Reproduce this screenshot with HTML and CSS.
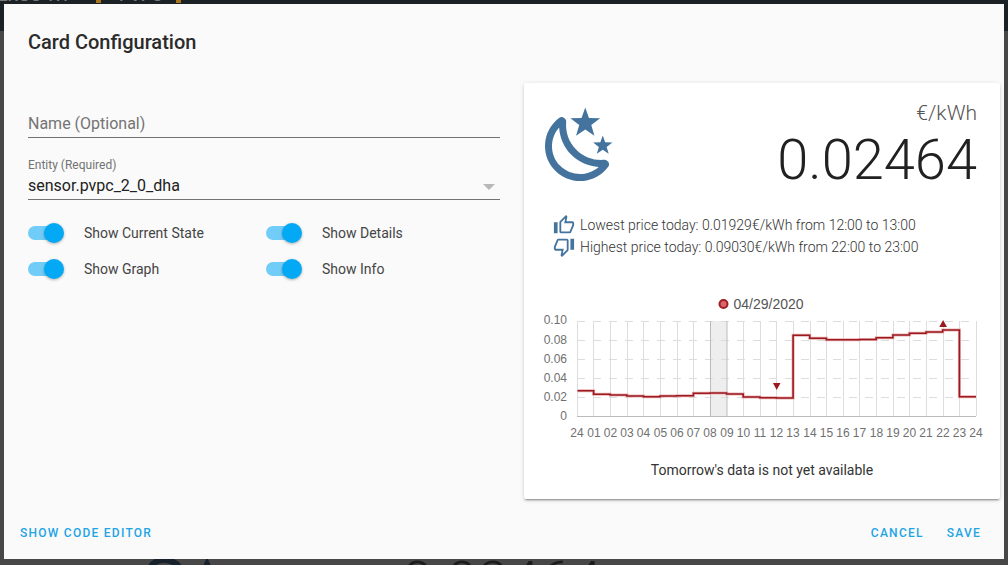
FILE: index.html
```html
<!DOCTYPE html>
<html lang="en">
<head>
    <meta charset="UTF-8">
    <meta name="viewport" content="width=device-width, initial-scale=1.0">
    <title>Card Configuration</title>
    <link rel="stylesheet" href="styles.css">
</head>
<body>
    <!-- page behind the dialog, only its edges show -->
    <div class="backdrop">
        <div class="backdrop-header">
            <span class="backdrop-title">ERGO TH</span>
            <span class="backdrop-tab">PVPC</span>
            <span class="backdrop-mark backdrop-mark-a"></span>
            <span class="backdrop-mark backdrop-mark-b"></span>
        </div>
        <svg class="backdrop-icon" viewBox="0 0 80 10"><path d="M0 10Q3 2 16 1Q30 2 34 10H26Q22 7 16 7Q10 7 7 10ZM55 10L59 1L63 10Z"/></svg>
        <span class="backdrop-price">0.02464</span>
    </div>

    <div class="dialog">
        <h2 class="dialog-title">Card Configuration</h2>

        <div class="dialog-body">
            <div class="editor">
                <div class="field field-name">
                    <span class="field-placeholder">Name (Optional)</span>
                </div>
                <div class="field field-entity">
                    <label class="field-label">Entity (Required)</label>
                    <div class="field-value">sensor.pvpc_2_0_dha</div>
                    <span class="field-arrow"></span>
                </div>
                <div class="switches">
                    <div class="switch-row"><span class="switch"><span class="switch-thumb"></span></span>Show Current State</div>
                    <div class="switch-row"><span class="switch"><span class="switch-thumb"></span></span>Show Details</div>
                    <div class="switch-row"><span class="switch"><span class="switch-thumb"></span></span>Show Graph</div>
                    <div class="switch-row"><span class="switch"><span class="switch-thumb"></span></span>Show Info</div>
                </div>
            </div>

            <div class="card">
                <div class="card-header">
                    <svg class="state-icon" viewBox="0 0 24 24"><path d="M17.75,4.09L15.22,6.03L16.13,9.09L13.5,7.28L10.87,9.09L11.78,6.03L9.25,4.09L12.44,4L13.5,1L14.56,4L17.75,4.09M21.25,11L19.61,12.25L20.2,14.23L18.5,13.06L16.8,14.23L17.39,12.25L15.75,11L17.81,10.95L18.5,9L19.19,10.95L21.25,11M18.97,15.95C19.8,15.87 20.69,17.05 20.16,17.8C19.84,18.25 19.5,18.67 19.08,19.07C15.17,23 8.84,23 4.94,19.07C1.03,15.17 1.03,8.83 4.94,4.93C5.34,4.53 5.76,4.17 6.21,3.85C6.96,3.32 8.14,4.21 8.06,5.04C7.79,7.9 8.75,10.87 10.95,13.06C13.14,15.26 16.1,16.22 18.97,15.95M17.33,17.97C14.5,17.81 11.7,16.64 9.53,14.5C7.36,12.31 6.2,9.5 6.04,6.68C3.23,9.82 3.34,14.64 6.35,17.66C9.37,20.67 14.19,20.78 17.33,17.97Z"/></svg>
                    <div class="state">
                        <div class="state-unit">€/kWh</div>
                        <div class="state-value">0.02464</div>
                    </div>
                </div>

                <div class="details">
                    <div class="detail-row">
                        <svg class="detail-icon" viewBox="0 0 24 24"><path d="M5,9V21H1V9H5M9,21A2,2 0 0,1 7,19V9C7,8.45 7.22,7.95 7.59,7.59L14.17,1L15.23,2.06C15.5,2.33 15.67,2.7 15.67,3.07L15.64,3.39L14.69,8H21C22.11,8 23,8.9 23,10V12C23,12.26 22.95,12.5 22.85,12.73L19.83,19.78C19.53,20.5 18.82,21 18,21H9M9,19H18.03L21,12V10H12.21L13.34,4.68L9,9.03V19Z"/></svg>
                        Lowest price today: 0.01929€/kWh from 12:00 to 13:00
                    </div>
                    <div class="detail-row">
                        <svg class="detail-icon" viewBox="0 0 24 24"><path d="M19,15V3H23V15H19M15,3A2,2 0 0,1 17,5V15C17,15.55 16.78,16.05 16.41,16.41L9.83,23L8.77,21.94C8.5,21.67 8.33,21.3 8.33,20.93L8.36,20.61L9.31,16H3C1.89,16 1,15.1 1,14V12C1,11.74 1.05,11.5 1.15,11.27L4.17,4.22C4.47,3.5 5.18,3 6,3H15M15,5H5.97L3,12V14H11.78L10.65,19.32L15,14.97V5Z"/></svg>
                        Highest price today: 0.09030€/kWh from 22:00 to 23:00
                    </div>
                </div>

                <!-- viewBox uses the same numbers as the screen so the hours line up -->
                <svg class="chart" viewBox="524 292 476 156">
                    <circle class="legend-dot" cx="723.5" cy="304" r="4"/>
                    <text class="legend-text" x="733.5" y="308.5">04/29/2020</text>

                    <rect class="now-band" x="710" y="321" width="17" height="95"/>
                    <path class="grid-x" d="M577.5 321V416M593.5 321V416M610.5 321V416M627.5 321V416M643.5 321V416M660.5 321V416M677.5 321V416M693.5 321V416M743.5 321V416M760.5 321V416M776.5 321V416M793.5 321V416M810.5 321V416M826.5 321V416M843.5 321V416M859.5 321V416M876.5 321V416M893.5 321V416M909.5 321V416M926.5 321V416M943.5 321V416M959.5 321V416M976.5 321V416"/>
                    <path class="grid-y" d="M577 321.5H976M577 340.5H976M577 359.5H976M577 378.5H976M577 397.5H976"/>
                    <path class="grid-now" d="M710.5 321V416M727 321V416"/>
                    <path class="grid-base" d="M577 416.5H976"/>

                    <path class="price-glow" d="M577.5 390.7H593.6V394.3H610.2V395H626.9V396H643.5V396.7H660.1V396H676.7V395.8H693.4V393.3H710V393H726.6V394H743.2V397H759.9V397.7H776.5V398H793.1V335.3H809.7V338.3H826.4V339.7H843V339.7H859.6V339.5H876.2V337.7H892.9V335H909.5V333.3H926.1V332H942.7V330H959.4V396.7H976"/>
                    <path class="price-line" d="M577.5 390.7H593.6V394.3H610.2V395H626.9V396H643.5V396.7H660.1V396H676.7V395.8H693.4V393.3H710V393H726.6V394H743.2V397H759.9V397.7H776.5V398H793.1V335.3H809.7V338.3H826.4V339.7H843V339.7H859.6V339.5H876.2V337.7H892.9V335H909.5V333.3H926.1V332H942.7V330H959.4V396.7H976"/>
                    <path class="price-mark" d="M773 383H780.5L776.7 390Z"/>
                    <path class="price-mark" d="M939.3 327H947L943.1 320Z"/>

                    <g class="ticks-y">
                        <text x="567" y="324">0.10</text>
                        <text x="567" y="343.5">0.08</text>
                        <text x="567" y="363">0.06</text>
                        <text x="567" y="382">0.04</text>
                        <text x="567" y="401">0.02</text>
                        <text x="567" y="420">0</text>
                    </g>
                    <g class="ticks-x">
                        <text x="577" y="437">24</text>
                        <text x="594" y="437">01</text>
                        <text x="610.5" y="437">02</text>
                        <text x="627" y="437">03</text>
                        <text x="643.5" y="437">04</text>
                        <text x="660.5" y="437">05</text>
                        <text x="677" y="437">06</text>
                        <text x="693.5" y="437">07</text>
                        <text x="710" y="437">08</text>
                        <text x="727" y="437">09</text>
                        <text x="743.5" y="437">10</text>
                        <text x="760" y="437">11</text>
                        <text x="776.5" y="437">12</text>
                        <text x="793" y="437">13</text>
                        <text x="810" y="437">14</text>
                        <text x="826.5" y="437">15</text>
                        <text x="843" y="437">16</text>
                        <text x="859.5" y="437">17</text>
                        <text x="876.5" y="437">18</text>
                        <text x="893" y="437">19</text>
                        <text x="909.5" y="437">20</text>
                        <text x="926" y="437">21</text>
                        <text x="943" y="437">22</text>
                        <text x="959.5" y="437">23</text>
                        <text x="976" y="437">24</text>
                    </g>
                </svg>

                <p class="card-note">Tomorrow's data is not yet available</p>
            </div>
        </div>

        <div class="dialog-actions">
            <button class="text-button">Show Code Editor</button>
            <div class="actions-right">
                <button class="text-button">Cancel</button>
                <button class="text-button">Save</button>
            </div>
        </div>
    </div>
</body>
</html>
```

FILE: styles.css
```css
* {
    box-sizing: border-box;
}

html, body {
    height: 100%;
}

body {
    margin: 0;
    padding: 4px;
    overflow: hidden;
    font-family: 'Roboto', sans-serif;
    background: #474747;
    color: #212121;
}

/* page behind the dialog */
.backdrop {
    position: absolute;
    top: 0;
    left: 0;
    width: 1008px;
    height: 565px;
    overflow: hidden;
}

.backdrop-header {
    height: 31px;
    background: #1c2126;
    color: #777;
    font-size: 17px;
    font-weight: 500;
}

.backdrop-title {
    position: absolute;
    top: -15px;
    left: -2px;
}

.backdrop-tab {
    position: absolute;
    top: -15px;
    left: 119px;
}

.backdrop-mark {
    position: absolute;
    top: 0;
    width: 5px;
    height: 3px;
    background: #a8741e;
}

.backdrop-mark-a {
    left: 96px;
}

.backdrop-mark-b {
    left: 176px;
}

.backdrop-icon {
    position: absolute;
    top: 556px;
    left: 148px;
    width: 80px;
    height: 10px;
    fill: #17222c;
}

.backdrop-price {
    position: absolute;
    top: 549px;
    left: 402px;
    font-size: 56px;
    font-weight: 300;
    color: #1c1c1c;
}

.dialog {
    position: relative;
    display: flex;
    flex-direction: column;
    width: 1000px;
    height: 555px;
    background: #fafafa;
}

.dialog-title {
    margin: 0;
    padding: 26px 24px 0;
    height: 79px;
    font-size: 20px;
    font-weight: 500;
    line-height: 24px;
    color: #2b2b2b;
}

.dialog-body {
    display: flex;
    flex: 1;
    padding-left: 24px;
}

.editor {
    width: 472px;
}

.field {
    position: relative;
    border-bottom: 1px solid #737373;
}

.field-name {
    height: 55px;
    padding-top: 31px;
}

.field-placeholder {
    font-size: 16px;
    line-height: 19px;
    color: #737373;
}

.field-entity {
    height: 62px;
    padding-top: 20px;
}

.field-label {
    display: block;
    font-size: 12px;
    line-height: 14px;
    color: #737373;
}

.field-value {
    margin-top: 4px;
    font-size: 16px;
    line-height: 19px;
}

.field-arrow {
    position: absolute;
    right: 5px;
    top: 46px;
    border-left: 6px solid transparent;
    border-right: 6px solid transparent;
    border-top: 6px solid #b8b8b8;
}

.switches {
    display: grid;
    grid-template-columns: 238px 1fr;
    grid-auto-rows: 36px;
    margin-top: 15px;
}

.switch-row {
    display: flex;
    align-items: center;
    font-size: 14px;
    color: #444;
}

.switch {
    position: relative;
    width: 32px;
    height: 14px;
    margin-right: 24px;
    border-radius: 7px;
    background: #71cdf8;
}

.switch-thumb {
    position: absolute;
    top: -3px;
    right: -4px;
    width: 20px;
    height: 20px;
    border-radius: 50%;
    background: #03a9f4;
    box-shadow: 0 1px 3px rgba(0, 0, 0, 0.3);
}

.card {
    width: 476px;
    height: 416px;
    margin-left: 24px;
    background: #ffffff;
    border-radius: 2px;
    box-shadow: 0 2px 2px rgba(0, 0, 0, 0.14), 0 1px 5px rgba(0, 0, 0, 0.12), 0 3px 1px -2px rgba(0, 0, 0, 0.2);
}

.card-header {
    display: flex;
    justify-content: space-between;
    height: 131px;
    padding: 21px 23px 0 14px;
}

.state-icon {
    width: 84px;
    height: 84px;
    fill: #44739e;
}

.state {
    text-align: right;
}

.state-unit {
    margin-top: -3px;
    font-size: 21px;
    font-weight: 300;
    line-height: 25px;
    color: #555;
}

.state-value {
    margin-top: 1px;
    font-size: 56px;
    font-weight: 300;
    line-height: 66px;
}

.details {
    padding-left: 29px;
}

.detail-row {
    display: flex;
    align-items: center;
    gap: 5px;
    height: 22px;
    font-size: 14px;
    font-weight: 300;
    color: #333;
}

.detail-icon {
    width: 22px;
    height: 22px;
    fill: #44739e;
    flex-shrink: 0;
}

.chart {
    display: block;
    width: 476px;
    height: 156px;
    margin-top: 34px;
    font-family: 'Liberation Sans', sans-serif;
}

.legend-dot {
    fill: #d9666a;
    stroke: #a01c22;
    stroke-width: 2;
}

.legend-text {
    font-size: 14px;
    fill: #555;
}

.now-band {
    fill: #eeeeee;
}

.grid-x {
    fill: none;
    stroke: #dddddd;
}

.grid-y {
    fill: none;
    stroke: #dddddd;
    stroke-dasharray: 8 8;
}

.grid-now {
    fill: none;
    stroke: #bbbbbb;
}

.grid-base {
    fill: none;
    stroke: #bbbbbb;
}

.price-glow {
    fill: none;
    stroke: #eab0b0;
    stroke-width: 3;
}

.price-line {
    fill: none;
    stroke: #9b1a20;
    stroke-width: 1.6;
}

.price-mark {
    fill: #9b1a20;
}

.ticks-y text {
    font-size: 12px;
    fill: #707070;
    text-anchor: end;
}

.ticks-x text {
    font-size: 12px;
    fill: #707070;
    text-anchor: middle;
}

.card-note {
    margin: 14px 0 0;
    font-size: 14px;
    line-height: 16px;
    text-align: center;
    color: #333;
}

.dialog-actions {
    display: flex;
    justify-content: space-between;
    align-items: center;
    height: 60px;
    padding: 8px 23px 0 16px;
}

.actions-right {
    display: flex;
    gap: 23px;
}

.text-button {
    padding: 0;
    border: none;
    background: none;
    font-family: 'Roboto', sans-serif;
    font-size: 12px;
    font-weight: 500;
    letter-spacing: 1.25px;
    text-transform: uppercase;
    color: #1ea5e4;
}
```
